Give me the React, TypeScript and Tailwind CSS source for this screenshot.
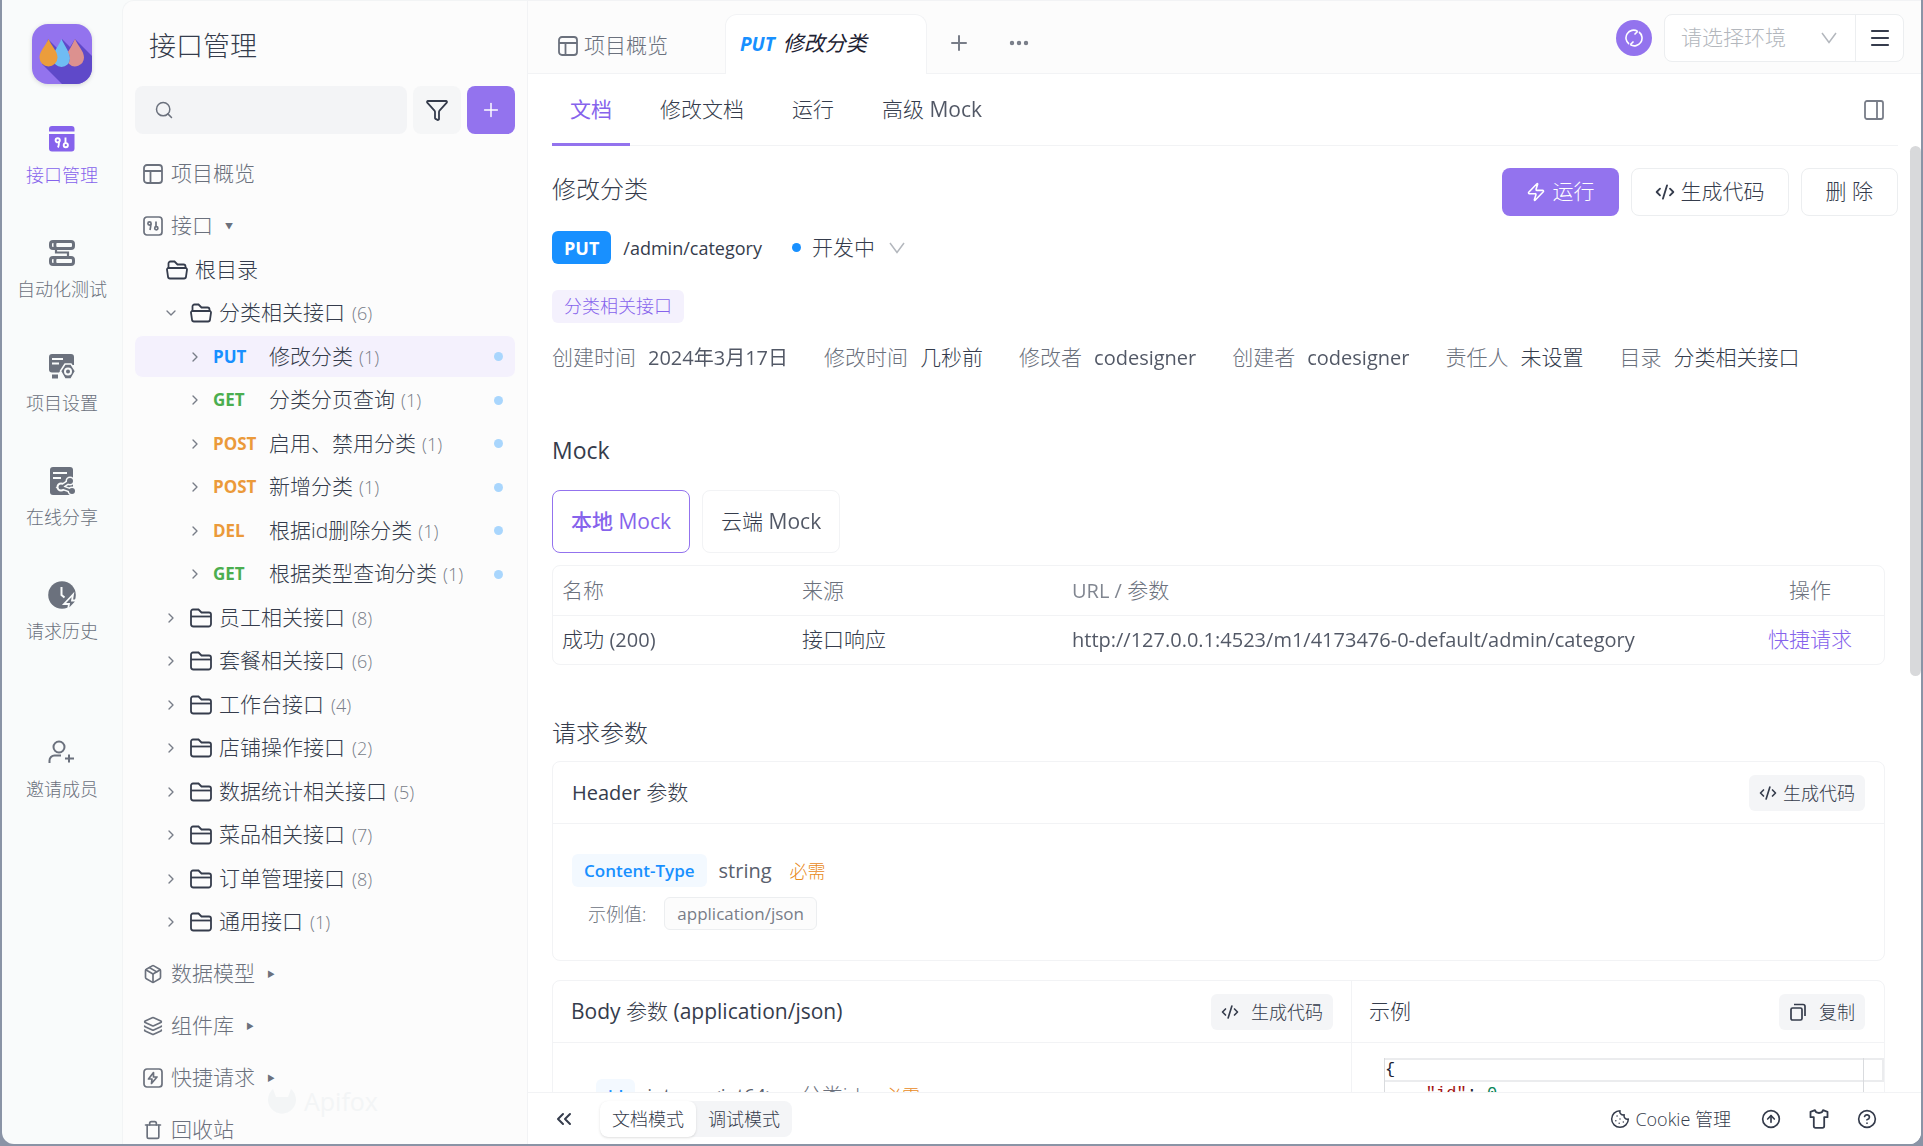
import { ReactNode } from 'react';
import {
  ChevronDown,
  ChevronRight,
  ChevronsLeft,
  CircleArrowUp,
  CircleQuestionMark,
  CodeXml,
  Cookie,
  Ellipsis,
  Funnel,
  Layers,
  Menu,
  Package,
  PanelRight,
  Plus,
  Search,
  Trash,
  Zap,
} from 'lucide-react';

// 请求方法颜色
const METHOD_COLORS: Record<string, string> = {
  PUT: 'text-[#1890ff]',
  GET: 'text-[#4bae4f]',
  POST: 'text-[#eb9a3a]',
  DEL: 'text-[#eb9a3a]',
};

const APIS = [
  { method: 'PUT', name: '修改分类', active: true },
  { method: 'GET', name: '分类分页查询' },
  { method: 'POST', name: '启用、禁用分类' },
  { method: 'POST', name: '新增分类' },
  { method: 'DEL', name: '根据id删除分类' },
  { method: 'GET', name: '根据类型查询分类' },
];

const FOLDERS = [
  { name: '员工相关接口', count: 8 },
  { name: '套餐相关接口', count: 6 },
  { name: '工作台接口', count: 4 },
  { name: '店铺操作接口', count: 2 },
  { name: '数据统计相关接口', count: 5 },
  { name: '菜品相关接口', count: 7 },
  { name: '订单管理接口', count: 8 },
  { name: '通用接口', count: 1 },
];

const META = [
  { label: '创建时间', value: '2024年3月17日', small: true },
  { label: '修改时间', value: '几秒前' },
  { label: '修改者', value: 'codesigner', small: true },
  { label: '创建者', value: 'codesigner', small: true },
  { label: '责任人', value: '未设置' },
  { label: '目录', value: '分类相关接口' },
];

function Logo() {
  return (
    <svg viewBox="0 0 60 60" className="w-[60px] h-[60px] drop-shadow-sm">
      <defs>
        <clipPath id="logo-box">
          <rect width="60" height="60" rx="16" />
        </clipPath>
      </defs>
      <g clipPath="url(#logo-box)">
        <rect width="60" height="60" fill="#9373ee" />
        <path d="M16 15L25 24L30 15L38 23L43 15L60 32V60H30L10 40Z" fill="#5f49c9" />
        <path d="M29.500 15C32.500 22 38 28 38 34.500a8.500 8.500 0 0 1-17 0C21 28 26.500 22 29.500 15Z" fill="#6fbcf3" />
        <path d="M16.500 15C19.500 22 25.500 27 25.500 33.500a9 9 0 0 1-18 0C7.500 27 13.500 22 16.500 15Z" fill="#eb9d3c" />
        <path d="M43 15C46 22 52 27 52 33.500a9 9 0 0 1-15.500 6C38.500 36 38.500 32 36 28C39 23 41 19 43 15Z" fill="#dc918f" />
      </g>
    </svg>
  );
}

function ApiIcon() {
  return (
    <svg viewBox="0 0 28 28" className="w-7 h-7">
      <path d="M1 6.500V4a3 3 0 0 1 3-3h19.500a3 3 0 0 1 3 3v2.500Z" fill="currentColor" />
      <path d="M1 9h25.500v14.500a3 3 0 0 1-3 3H4a3 3 0 0 1-3-3Z" fill="currentColor" />
      <g fill="none" stroke="#fff" strokeWidth="1.900">
        <circle cx="9.700" cy="15.300" r="2.100" />
        <path d="M11 16.500c0 2.500-.3 4.500-1 6M17.500 12.500v6" />
        <circle cx="17.800" cy="20.200" r="2.100" />
      </g>
    </svg>
  );
}

function TestIcon() {
  return (
    <svg viewBox="0 0 28 28" className="w-7 h-7" fill="none" stroke="currentColor">
      <rect x="2.500" y="2.500" width="23" height="7" rx="2.500" strokeWidth="3" />
      <rect x="2.500" y="18.500" width="23" height="7" rx="2.500" strokeWidth="3" />
      <path d="M7 3v6M7 19v6" strokeWidth="3" />
      <path d="M8.500 6H23M8.500 22H23" stroke="#f9fbfb" strokeWidth="1.500" />
      <path d="M8 10v3.500h12V18" strokeWidth="2.200" />
    </svg>
  );
}

function SettingIcon() {
  return (
    <svg viewBox="0 0 28 28" className="w-7 h-7">
      <path d="M4 1h19a3 3 0 0 1 3 3v8H17l-6 7.500H4a3 3 0 0 1-3-3V4a3 3 0 0 1 3-3Z" fill="currentColor" />
      <path d="M4 6h11M4 10.500h7" stroke="#f9fbfb" strokeWidth="1.800" />
      <path d="M4 21.500h6v4H4z" fill="currentColor" />
      <path
        d="M17 11h6l4.500 7-4.500 8h-6l-4.500-8z"
        fill="currentColor"
        stroke="#f9fbfb"
        strokeWidth="1.500"
        strokeLinejoin="round"
      />
      <circle cx="20" cy="18.500" r="3" fill="none" stroke="#f9fbfb" strokeWidth="2" />
    </svg>
  );
}

function ShareIcon() {
  return (
    <svg viewBox="0 0 28 28" className="w-7 h-7">
      <rect x="2" y="0" width="23" height="28" rx="3" fill="currentColor" />
      <path d="M5 6h14M5 11h8" stroke="#f9fbfb" strokeWidth="2" />
      <g stroke="#f9fbfb" fill="none" strokeWidth="5">
        <path d="M22 14l-9 6 11 4" />
        <circle cx="22" cy="14" r="2" />
        <circle cx="13" cy="20" r="2" />
        <circle cx="24" cy="24" r="2" />
      </g>
      <path d="M22 14l-9 6 11 4" stroke="currentColor" strokeWidth="2" fill="none" />
      <circle cx="22" cy="14" r="3" fill="currentColor" />
      <circle cx="13" cy="20" r="2.500" fill="currentColor" />
      <circle cx="24" cy="24" r="3" fill="currentColor" />
    </svg>
  );
}

function HistoryIcon() {
  return (
    <svg viewBox="0 0 28 28" className="w-7 h-7 overflow-visible">
      <circle cx="14" cy="14" r="13.800" fill="currentColor" />
      <path d="M13.500 6v8l3 2.500" fill="none" stroke="#f9fbfb" strokeWidth="2" />
      <path d="M25 13.500l-9 9.500h5l-1 6 9-9.500h-5z" fill="currentColor" stroke="#f9fbfb" strokeWidth="1.800" />
    </svg>
  );
}

function InviteIcon() {
  return (
    <svg viewBox="0 0 28 28" className="w-7 h-7" fill="none" stroke="currentColor" strokeWidth="2">
      <circle cx="11" cy="8" r="5.500" />
      <path d="M1.500 24v-2.500a5 5 0 0 1 5-5H13M21 15.500v8M17 19.500h9" />
    </svg>
  );
}

function OverviewIcon() {
  return (
    <svg viewBox="0 0 20 20" className="w-5 h-5 shrink-0" fill="none" stroke="currentColor" strokeWidth="1.800">
      <rect x="1" y="1" width="18" height="18" rx="3" />
      <path d="M1 7h18M7.500 7v12" />
    </svg>
  );
}

function ApiBoxIcon() {
  return (
    <svg viewBox="0 0 20 20" className="w-5 h-5 shrink-0" fill="none" stroke="currentColor" strokeWidth="1.700">
      <rect x="1" y="1" width="18" height="18" rx="3" />
      <circle cx="6.500" cy="7.500" r="1.600" />
      <path d="M7.800 8c0 2.500-.3 4-.8 6M13 5.500v5" />
      <circle cx="13.300" cy="12.300" r="1.600" />
    </svg>
  );
}

function ZapBoxIcon() {
  return (
    <svg viewBox="0 0 20 20" className="w-5 h-5 shrink-0" fill="none" stroke="currentColor" strokeWidth="1.700">
      <rect x="1" y="1" width="18" height="18" rx="3" />
      <path d="M10.500 4.500l-5 6.500h3.500l-.5 4.500 5.500-6.500h-3.500z" strokeLinejoin="round" />
    </svg>
  );
}

function FolderIcon() {
  return (
    <svg viewBox="0 0 22 20" className="w-[22px] h-5 shrink-0" fill="none" stroke="currentColor" strokeWidth="1.800">
      <path d="M1 16V3.500A2 2 0 0 1 3 1.500h5.500l3 3H19a2 2 0 0 1 2 2V16a2.500 2.500 0 0 1-2.500 2.500h-15A2.500 2.500 0 0 1 1 16Z" />
      <path d="M1 8.500h20" />
    </svg>
  );
}

function FolderOpenIcon() {
  return (
    <svg viewBox="0 0 22 20" className="w-[22px] h-5 shrink-0" fill="none" stroke="currentColor" strokeWidth="1.800">
      <path d="M2.500 8V3.500a2 2 0 0 1 2-2h4l3 3h6a2 2 0 0 1 2 2V8" />
      <path d="M2.500 8h17a1.500 1.500 0 0 1 1.500 1.700l-1 7a2 2 0 0 1-2 1.800H4a2 2 0 0 1-2-1.800l-1-7A1.500 1.500 0 0 1 2.500 8Z" />
    </svg>
  );
}

function ArrowDown({ className = '' }: { className?: string }) {
  return (
    <svg viewBox="0 0 16 12" className={`w-4 h-3 shrink-0 ${className}`} fill="none" stroke="currentColor" strokeWidth="1.500">
      <path d="M1 1l7 9.500L15 1" />
    </svg>
  );
}

function SyncIcon() {
  return (
    <svg viewBox="0 0 18 18" className="w-[18px] h-[18px]" fill="none" stroke="currentColor" strokeWidth="1.600">
      <path d="M4 15A7.700 7.700 0 0 1 12.500 2.200M14 3a7.700 7.700 0 0 1-8.500 12.800" />
      <path d="M9.500 5.500L12.800 2.300M8.500 12.500L5.200 15.700" />
    </svg>
  );
}

function CopyIcon() {
  return (
    <svg viewBox="0 0 18 18" className="w-[18px] h-[18px]" fill="none" stroke="currentColor" strokeWidth="1.700">
      <rect x="2" y="5" width="11" height="12" rx="1.500" />
      <path d="M5 1.500h9a2 2 0 0 1 2 2V13" />
    </svg>
  );
}

function ShirtIcon() {
  return (
    <svg viewBox="0 0 20 20" className="w-5 h-5" fill="none" stroke="currentColor" strokeWidth="1.800" strokeLinejoin="round">
      <path d="M6 1.200c.6 3.700 7.400 3.700 8 0l4.500 1.600v5.400h-3.300V17a1.800 1.800 0 0 1-1.800 1.800H6.600A1.800 1.800 0 0 1 4.800 17V8.200H1.500V2.800Z" />
    </svg>
  );
}

function RailItem({ icon, label, active }: { icon: ReactNode; label: string; active?: boolean }) {
  return (
    <button
      className={`flex flex-col items-center gap-[10px] text-lg leading-6 ${active ? 'text-[#8663ec]' : 'text-[#6b717d]'}`}
    >
      {icon}
      {label}
    </button>
  );
}

function TreeRow({ children, active }: { children: ReactNode; active?: boolean }) {
  return (
    <li
      className={`flex items-center h-[43px] even:h-11 rounded-lg border-y border-[#fcfcfc] ${active ? 'bg-[#f4f1fd]' : ''}`}
    >
      {children}
    </li>
  );
}

function SectionRow({ icon, label, caret }: { icon: ReactNode; label: string; caret?: string }) {
  return (
    <button className="flex items-center w-full h-11 pl-2 gap-2 text-[21px] text-[#6b717d]">
      {icon}
      <span>{label}</span>
      {caret && <span className="ml-1 text-[8px]">{caret}</span>}
    </button>
  );
}

function Latin({ children }: { children: ReactNode }) {
  return <span className="text-[20px] font-normal opacity-85">{children}</span>;
}

function Rail() {
  return (
    <nav className="flex flex-col items-center w-[120px] shrink-0 pt-6">
      <Logo />
      <div className="flex flex-col items-center gap-[52px] mt-[41px]">
        <RailItem icon={<ApiIcon />} label="接口管理" active />
        <RailItem icon={<TestIcon />} label="自动化测试" />
        <RailItem icon={<SettingIcon />} label="项目设置" />
        <RailItem icon={<ShareIcon />} label="在线分享" />
        <RailItem icon={<HistoryIcon />} label="请求历史" />
      </div>
      <div className="mt-24">
        <RailItem icon={<InviteIcon />} label="邀请成员" />
      </div>
    </nav>
  );
}

function Sidebar() {
  return (
    <aside className="relative w-[405px] shrink-0 px-3 bg-[#fcfcfc] border-l border-t border-[#f2f4f5] rounded-tl-xl overflow-hidden">
      <h1 className="pl-[14px] pt-[25px] text-[27px] leading-10 text-[#353c4c]">接口管理</h1>
      <div className="flex gap-[6px] mt-5">
        <label className="flex items-center flex-1 h-12 pl-[19px] rounded-lg bg-[#f3f4f6] text-[#6b717d]">
          <Search className="w-5 h-5 shrink-0" strokeWidth={1.8} />
          <input aria-label="搜索" className="w-full min-w-0 px-2 text-lg bg-transparent outline-none" />
        </label>
        <button aria-label="筛选" className="flex items-center justify-center w-12 h-12 rounded-lg bg-[#f5f6f7] text-[#353c4c]">
          <Funnel className="w-6 h-6" strokeWidth={1.8} />
        </button>
        <button aria-label="新建" className="flex items-center justify-center w-12 h-12 rounded-lg bg-[#9373ee] text-white">
          <Plus className="w-[22px] h-[22px]" strokeWidth={1.6} />
        </button>
      </div>

      <div className="flex flex-col gap-2 mt-[18px]">
        <SectionRow icon={<OverviewIcon />} label="项目概览" />
        <SectionRow icon={<ApiBoxIcon />} label="接口" caret="▼" />
      </div>

      <ul className="text-[21px] text-[#353c4c]">
        <TreeRow>
          <span className="flex items-center gap-[7px] pl-[31px]">
            <FolderOpenIcon />
            根目录
          </span>
        </TreeRow>
        <TreeRow>
          <span className="flex items-center gap-[7px] pl-7">
            <ChevronDown className="w-4 h-4 mr-1 text-[#787d88]" />
            <FolderOpenIcon />
            分类相关接口
            <span className="text-lg text-[#787d88]">(6)</span>
          </span>
        </TreeRow>
        {APIS.map((api) => (
          <TreeRow key={api.name} active={api.active}>
            <ChevronRight className="w-4 h-4 ml-[52px] text-[#787d88]" />
            <span className={`w-14 ml-[10px] text-[17px] font-bold ${METHOD_COLORS[api.method]}`}>{api.method}</span>
            <span>{api.name}</span>
            <span className="ml-[6px] text-lg text-[#787d88]">(1)</span>
            <span className="w-[9px] h-[9px] ml-auto mr-3 rounded-full bg-[#a9d6fd]" />
          </TreeRow>
        ))}
        {FOLDERS.map((folder) => (
          <TreeRow key={folder.name}>
            <span className="flex items-center gap-[7px] pl-7">
              <ChevronRight className="w-4 h-4 mr-1 text-[#787d88]" />
              <FolderIcon />
              {folder.name}
              <span className="text-lg text-[#787d88]">({folder.count})</span>
            </span>
          </TreeRow>
        ))}
      </ul>

      <div className="flex flex-col gap-2 mt-2">
        <SectionRow icon={<Package className="w-5 h-5" strokeWidth={2} />} label="数据模型" caret="▶" />
        <SectionRow icon={<Layers className="w-5 h-5" strokeWidth={2} />} label="组件库" caret="▶" />
        <SectionRow icon={<ZapBoxIcon />} label="快捷请求" caret="▶" />
        <SectionRow icon={<Trash className="w-5 h-5" strokeWidth={2} />} label="回收站" />
      </div>

      <div className="absolute bottom-6 left-[145px] flex items-center gap-2 text-[25px] font-medium text-[#f3f5f6]">
        <svg viewBox="0 0 28 28" className="w-7 h-7" fill="currentColor">
          <path d="M5 2l3 8h12l3-8a14 14 0 1 1-18 0Z" />
        </svg>
        Apifox
      </div>
    </aside>
  );
}

function TabBar() {
  return (
    <header className="flex items-end h-[74px] shrink-0 bg-[#fcfcfc] border-y border-[#f2f3f5] text-[21px]">
      <button className="flex items-center gap-[6px] h-[55px] w-[197px] pl-[30px] text-[#6b717d]">
        <OverviewIcon />
        项目概览
      </button>
      <button className="flex items-center gap-2 h-[60px] w-[202px] -mb-px pb-px pl-[14px] bg-white border border-b-0 border-[#f2f3f5] rounded-t-xl italic text-[#1d2233]">
        <span className="text-[19px] font-bold text-[#1890ff]">PUT</span>
        <span className="font-normal">修改分类</span>
      </button>
      <button aria-label="新标签" className="ml-5 mb-[18px] text-[#787d88]">
        <Plus className="w-6 h-6" strokeWidth={2} />
      </button>
      <button aria-label="更多" className="ml-9 mb-[18px] text-[#787d88]">
        <Ellipsis className="w-6 h-6" strokeWidth={2.4} />
      </button>
      <div className="flex items-center ml-auto mr-[17px] mb-[11px] gap-3">
        <button aria-label="同步" className="flex items-center justify-center w-9 h-9 rounded-full bg-[#9373ee] text-white">
          <SyncIcon />
        </button>
        <div className="flex h-12 bg-white border border-[#eceef0] rounded-lg">
          <div className="relative flex items-center w-[191px] border-r border-[#eceef0] text-[#b3b7bd]">
            <select aria-label="环境" className="w-full h-full pl-4 appearance-none outline-none bg-transparent">
              <option>请选择环境</option>
            </select>
            <ArrowDown className="absolute right-[18px] pointer-events-none" />
          </div>
          <button aria-label="菜单" className="flex items-center justify-center w-[47px] text-[#353c4c]">
            <Menu className="w-6 h-6" strokeWidth={2.2} />
          </button>
        </div>
      </div>
    </header>
  );
}

function SubTabs() {
  return (
    <div className="flex gap-12 h-[72px] shrink-0 ml-6 mr-[23px] border-b border-[#f2f3f5] text-[21px] text-[#353c4c]">
      <button className="-mr-[18px] -mb-px px-[18px] pt-[3px] border-b-3 border-[#9373ee] text-[#8663ec] font-normal">
        文档
      </button>
      <button>修改文档</button>
      <button>运行</button>
      <button>
        高级 <span className="font-normal opacity-85">Mock</span>
      </button>
      <button aria-label="分栏" className="ml-auto mr-3 text-[#787d88]">
        <PanelRight className="w-6 h-6" strokeWidth={1.8} />
      </button>
    </div>
  );
}

function SmallButton({ icon, children, wide }: { icon: ReactNode; children: ReactNode; wide?: boolean }) {
  return (
    <button
      className={`flex items-center h-9 px-[10px] rounded-md bg-[#f4f5f7] text-lg text-[#353c4c] ${wide ? 'gap-3' : 'gap-[6px]'}`}
    >
      {icon}
      {children}
    </button>
  );
}

function MockTable() {
  return (
    <div className="mt-3 border border-[#f2f3f5] rounded-lg">
      <table className="w-full table-fixed text-left text-[21px] text-[#353c4c]">
        <thead>
          <tr className="h-[49px] border-b border-[#f2f3f5] text-[#6b717d]">
            <th className="w-[240px] px-[9px] font-light">名称</th>
            <th className="w-[270px] px-[9px] font-light">来源</th>
            <th className="px-[9px] font-light">
              <Latin>URL /</Latin> 参数
            </th>
            <th className="w-[148px] font-light text-center">操作</th>
          </tr>
        </thead>
        <tbody>
          <tr className="h-[49px]">
            <td className="px-[9px]">
              成功 <Latin>(200)</Latin>
            </td>
            <td className="px-[9px]">接口响应</td>
            <td className="px-[9px]">
              <Latin>http://127.0.0.1:4523/m1/4173476-0-default/admin/category</Latin>
            </td>
            <td className="text-center">
              <a href="#" className="text-[#8663ec]">快捷请求</a>
            </td>
          </tr>
        </tbody>
      </table>
    </div>
  );
}

function DocContent() {
  return (
    <div className="flex-1 min-h-0 overflow-hidden pl-6 pr-[23px] pt-[22px] text-[21px] text-[#353c4c]">
      <div className="flex">
        <h2 className="text-2xl leading-[42px]">修改分类</h2>
        <div className="flex gap-3 ml-auto">
          <button className="flex items-center gap-[7px] h-12 px-6 rounded-lg bg-[#9373ee] text-white">
            <Zap className="w-5 h-5" strokeWidth={1.9} />
            运行
          </button>
          <button className="flex items-center gap-[6px] h-12 px-[23px] border border-[#eceef0] rounded-lg">
            <CodeXml className="w-5 h-5" strokeWidth={2.2} />
            生成代码
          </button>
          <button className="h-12 px-6 border border-[#eceef0] rounded-lg">删 除</button>
        </div>
      </div>

      <div className="flex items-center h-[33px] mt-[15px]">
        <span className="flex items-center h-full px-3 rounded-md bg-[#1890ff] text-lg font-bold text-white">PUT</span>
        <span className="ml-3 text-lg font-normal">/admin/category</span>
        <span className="w-[9px] h-[9px] ml-[30px] mr-[11px] rounded-full bg-[#1890ff]" />
        开发中
        <ArrowDown className="ml-[14px] text-[#b3b7bd]" />
      </div>

      <div className="flex mt-[26px]">
        <span className="px-3 rounded-md bg-[#f4f1fd] text-lg leading-[33px] text-[#8663ec]">分类相关接口</span>
      </div>

      <dl className="flex gap-9 mt-5 leading-7">
        {META.map((item) => (
          <div key={item.label} className="flex gap-3">
            <dt className="text-[#6b717d]">{item.label}</dt>
            <dd>{item.small ? <Latin>{item.value}</Latin> : item.value}</dd>
          </div>
        ))}
      </dl>

      <div className="mr-[13px]">
        <h3 className="mt-[60px] text-[23px] leading-9 font-medium">Mock</h3>
        <div className="flex gap-3 mt-[22px]">
          <button className="h-[63px] px-[18px] pt-px border border-[#9373ee] rounded-lg text-[#8663ec] font-medium">
            本地 Mock
          </button>
          <button className="h-[63px] px-[18px] pt-px border border-[#f2f3f5] rounded-lg">
            云端 <span className="font-normal opacity-85">Mock</span>
          </button>
        </div>
        <MockTable />

        <h3 className="mt-[50px] text-2xl leading-9">请求参数</h3>
        <section className="h-[200px] mt-[10px] border border-[#f2f3f5] rounded-lg">
          <div className="flex items-center justify-between h-[62px] px-[19px] border-b border-[#f2f3f5]">
            <h4>
              <span className="text-[20px] font-medium">Header</span> 参数
            </h4>
            <SmallButton icon={<CodeXml className="w-[18px] h-[18px]" strokeWidth={2.2} />}>生成代码</SmallButton>
          </div>
          <div className="pt-[30px] pl-[19px]">
            <div className="flex items-center h-[33px]">
              <span className="px-3 rounded-md bg-[#f3f9ff] text-[17px] leading-[33px] font-semibold text-[#1890ff]">
                Content-Type
              </span>
              <span className="ml-3 text-[20px] font-normal text-[#5a606d]">string</span>
              <span className="ml-[18px] text-lg text-[#e88a1c]">必需</span>
            </div>
            <div className="flex items-center mt-[10px] ml-4 text-lg text-[#6b717d]">
              示例值:
              <span className="ml-[18px] px-3 border border-[#eceef0] rounded-md bg-[#fcfcfc] text-[17px] leading-[31px] font-normal text-[#787d88]">
                application/json
              </span>
            </div>
          </div>
        </section>

        <section className="flex h-[300px] mt-[19px] border border-[#f2f3f5] rounded-lg">
          <div className="flex-1 border-r border-[#f2f3f5]">
            <div className="flex items-center justify-between h-[62px] px-[18px] border-b border-[#f2f3f5]">
              <h4>
                <span className="font-medium">Body</span> 参数 <span className="font-medium">(application/json)</span>
              </h4>
              <SmallButton wide icon={<CodeXml className="w-[18px] h-[18px]" strokeWidth={2.2} />}>生成代码</SmallButton>
            </div>
            <div className="flex items-center h-[33px] mt-9 ml-[43px]">
              <span className="px-3 rounded-md bg-[#f3f9ff] text-[17px] leading-[33px] font-semibold text-[#1890ff]">id</span>
              <span className="ml-3 text-[19px] font-normal text-[#5a606d]">integer&lt;int64&gt;</span>
              <span className="ml-6 text-[#6b717d]">分类id</span>
              <span className="ml-6 text-lg text-[#e88a1c]">必需</span>
            </div>
          </div>
          <div className="w-[532px]">
            <div className="flex items-center justify-between h-[62px] pl-[17px] pr-[19px] border-b border-[#f2f3f5]">
              <h4>示例</h4>
              <SmallButton wide icon={<CopyIcon />}>复制</SmallButton>
            </div>
            <div className="flex mt-[15px] ml-8 text-lg leading-6 font-normal text-[#1d2233]">
              <pre className="flex-1 border-l border-[#d9dbde] font-['Liberation_Mono',monospace] text-[17px]">
                <div className="h-6 border-y-2 border-[#ebecee] leading-5">{'{'}</div>
                <div>
                  {'    '}
                  <span className="text-[#a31515]">"id"</span>: <span className="text-[#098658]">0</span>,
                </div>
              </pre>
              <div className="w-[21px] h-40 border-l border-[#d9dbde]">
                <div className="h-6 border-2 border-l-0 border-[#ebecee]" />
              </div>
            </div>
          </div>
        </section>
      </div>
    </div>
  );
}

function Footer() {
  return (
    <footer className="flex items-center h-[52px] shrink-0 pl-6 pr-[44px] border-t border-[#f2f3f5] bg-white text-lg text-[#353c4c]">
      <button aria-label="收起">
        <ChevronsLeft className="w-6 h-6" strokeWidth={2} />
      </button>
      <div className="flex h-9 ml-6 rounded-lg bg-[#f4f5f7]">
        <button className="px-3 rounded-lg bg-white shadow">文档模式</button>
        <button className="px-3">调试模式</button>
      </div>
      <button className="flex items-center gap-[5px] ml-auto">
        <Cookie className="w-5 h-5" strokeWidth={1.8} />
        Cookie 管理
      </button>
      <div className="flex gap-7 ml-[30px]">
        <button aria-label="更新">
          <CircleArrowUp className="w-5 h-5" strokeWidth={2} />
        </button>
        <button aria-label="主题">
          <ShirtIcon />
        </button>
        <button aria-label="帮助">
          <CircleQuestionMark className="w-5 h-5" strokeWidth={2} />
        </button>
      </div>
    </footer>
  );
}

export default function App() {
  return (
    <div className="h-screen px-[2px] pb-[2px] bg-[#8a94a6] font-['Open_Sans','Noto_Sans_CJK_SC',sans-serif] font-light">
      <div className="flex h-full rounded-b-xl overflow-hidden bg-[#f9fbfb]">
        <Rail />
        <Sidebar />
        <main className="relative flex flex-col flex-1 min-w-0 bg-white border-l border-[#f2f3f5]">
          <TabBar />
          <SubTabs />
          <DocContent />
          <Footer />
          {/* 滚动条 */}
          <div className="absolute right-0 top-[146px] w-[11px] h-[530px] rounded-full bg-[#d8d9db]" />
        </main>
      </div>
    </div>
  );
}
